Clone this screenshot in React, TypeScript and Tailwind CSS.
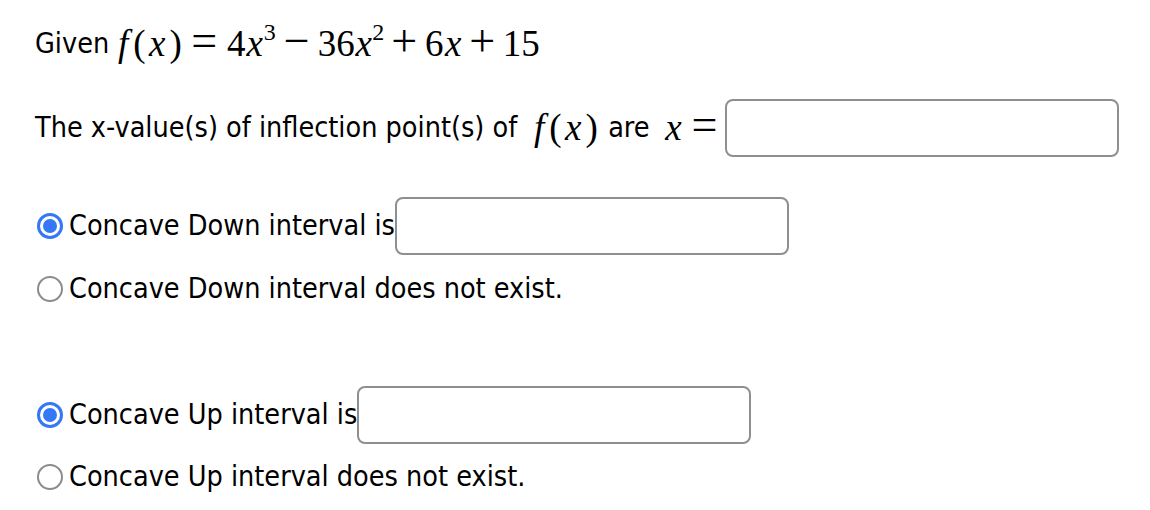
import React from "react";

// math tokens: Liberation Serif stands in for the TeX font
const mathFont = { fontFamily: '"Liberation Serif", "DejaVu Serif", serif' };

function T({ w, children, it }: { w: string; children: React.ReactNode; it?: boolean }) {
  return <span className={`inline-block text-center ${w} ${it ? "italic" : ""}`}>{children}</span>;
}

function Op({ w, children }: { w: string; children: React.ReactNode }) {
  return <span className={`inline-block text-center text-[46px] leading-none ${w}`}>{children}</span>;
}

function Sup({ w, children }: { w: string; children: React.ReactNode }) {
  return <span className={`relative -top-[16px] inline-block text-center text-[24px] ${w}`}>{children}</span>;
}

function Fx() {
  return (
    <>
      <T w="w-[20px]" it>f</T>
      <T w="w-[12px]">(</T>
      <T w="w-[24px]" it>x</T>
      <T w="w-[13px]">)</T>
    </>
  );
}

function Radio({ checked }: { checked?: boolean }) {
  return checked ? (
    <span className="ml-[2px] mr-[6px] flex h-[26px] w-[26px] shrink-0 items-center justify-center rounded-full border-[3px] border-[#3478f6] bg-white">
      <span className="h-[14px] w-[14px] rounded-full bg-[#3478f6]" />
    </span>
  ) : (
    <span className="ml-[2px] mr-[6px] h-[26px] w-[26px] shrink-0 rounded-full border-2 border-[#8c8c8c] bg-white" />
  );
}

function Box() {
  return (
    <input
      type="text"
      className="h-[58px] w-[394px] rounded-[8px] border-2 border-[#8f8f8f] bg-white outline-none"
    />
  );
}

export default function App() {
  return (
    <div
      className="min-h-[510px] w-[1150px] bg-white pl-[35px] text-[28.5px] text-black"
      style={{ fontFamily: '"DejaVu Sans Condensed", "DejaVu Sans", Verdana, sans-serif' }}
    >
      <div className="box-content flex h-[50px] items-center pt-[19px]">
        <span>Given</span>
        <span className="ml-[4px] text-[37px] whitespace-nowrap" style={mathFont}>
          <Fx />
          <Op w="w-[44px]">=</Op>
          <T w="w-[20px]">4</T>
          <T w="w-[17px]" it>x</T>
          <Sup w="w-[13px]">3</Sup>
          <Op w="w-[41px]">−</Op>
          <T w="w-[38px]">36</T>
          <T w="w-[17px]" it>x</T>
          <Sup w="w-[12px]">2</Sup>
          <Op w="w-[40px]">+</Op>
          <T w="w-[20px]">6</T>
          <T w="w-[18px]" it>x</T>
          <Op w="w-[40px]">+</Op>
          <T w="w-[38px]">15</T>
        </span>
      </div>

      <div className="mt-[30px] flex h-[58px] items-center">
        <span>The x-value(s) of inflection point(s) of</span>
        <span className="ml-[12px] text-[37px] whitespace-nowrap" style={mathFont}>
          <Fx />
        </span>
        <span className="ml-[10px]">are</span>
        <span className="ml-[12px] text-[37px] whitespace-nowrap" style={mathFont}>
          <T w="w-[24px]" it>x</T>
          <Op w="w-[38px]">=</Op>
        </span>
        <span className="ml-[1px] flex">
          <Box />
        </span>
      </div>

      <div className="mt-[40px] flex h-[58px] items-center">
        <Radio checked />
        <span>Concave Down interval is</span>
        <Box />
      </div>

      <div className="mt-[14px] flex h-[40px] items-center">
        <Radio />
        <span>Concave Down interval does not exist.</span>
      </div>

      <div className="mt-[77px] flex h-[58px] items-center">
        <Radio checked />
        <span>Concave Up interval is</span>
        <Box />
      </div>

      <div className="mt-[13px] flex h-[40px] items-center">
        <Radio />
        <span>Concave Up interval does not exist.</span>
      </div>
    </div>
  );
}
